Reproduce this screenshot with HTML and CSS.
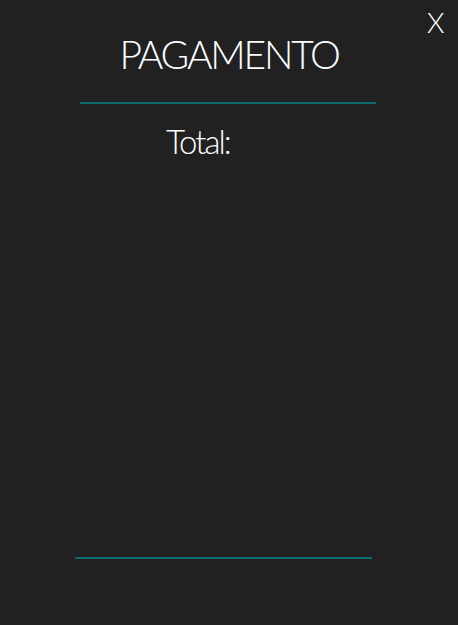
FILE: index.html
```html
<!DOCTYPE html>
<html>
<head>
<meta charset="utf-8">
<link rel="stylesheet" href="styles.css">
</head>
<body>
<div class="panel">
  <button class="close">X</button>
  <h1 class="title">PAGAMENTO</h1>
  <hr class="rule rule-top">
  <div class="total">Total:</div>
  <div class="spacer"></div>
  <hr class="rule rule-bottom">
</div>
</body>
</html>
```

FILE: styles.css
```css
html, body {
  margin: 0;
  padding: 0;
  background: #212121;
  height: 100%;
}
.panel {
  position: relative;
  width: 458px;
  height: 625px;
  display: flex;
  flex-direction: column;
  font-family: "Lato", "DejaVu Sans", sans-serif;
  font-weight: 300;
  color: #ffffff;
}
.close {
  position: absolute;
  top: 7px;
  left: 427px;
  background: none;
  border: none;
  padding: 0;
  color: #ffffff;
  font-family: "Lato", sans-serif;
  font-weight: 300;
  font-size: 28px;
  line-height: 30px;
}
.title {
  margin: 30px 0 0 0;
  font-size: 39px;
  font-weight: 300;
  line-height: 48px;
  letter-spacing: -2.2px;
  text-align: center;
}
.rule {
  border: none;
  height: 2px;
  background: #0b6e6e;
  margin: 0;
}
.rule-top {
  margin: 24px 0 0 80px;
  width: 296px;
}
.total {
  margin: 17px 0 0 166px;
  font-size: 33px;
  line-height: 40px;
  letter-spacing: -2px;
}
.spacer {
  flex: 0 0 396px;
}
.rule-bottom {
  margin: 0 0 0 75px;
  width: 297px;
}
```
